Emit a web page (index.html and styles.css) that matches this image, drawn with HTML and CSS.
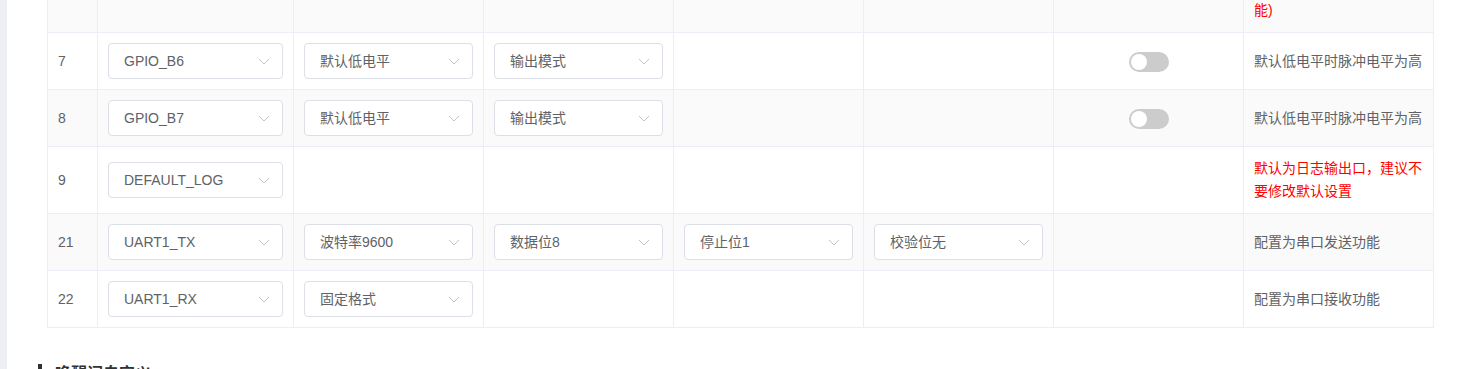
FILE: index.html
```html
<!DOCTYPE html>
<html lang="zh-CN">
<head>
  <meta charset="UTF-8">
  <meta name="viewport" content="width=device-width, initial-scale=1.0">
  <title>引脚配置</title>
  <link rel="stylesheet" href="styles.css">
</head>
<body>
  <div class="layout">
    <div class="side-strip"></div>
    <div class="page">
      <table class="pin-table">
        <colgroup>
          <col class="c-no">
          <col class="c-pin">
          <col class="c-std"><col class="c-std"><col class="c-std"><col class="c-std"><col class="c-std"><col class="c-std">
        </colgroup>
        <tbody>
          <tr>
            <td><div class="cell"></div></td>
            <td><div class="cell"></div></td>
            <td><div class="cell"></div></td>
            <td><div class="cell"></div></td>
            <td><div class="cell"></div></td>
            <td><div class="cell"></div></td>
            <td><div class="cell"></div></td>
            <td><div class="cell warn">默认为唤醒引脚，低电平时唤醒模块（需开启低功耗功能)</div></td>
          </tr>
          <tr>
            <td><div class="cell">7</div></td>
            <td><div class="cell"><div class="select">GPIO_B6<span class="arrow"><svg width="12" height="7" viewBox="0 0 12 7"><path d="M1 1 L6 6 L11 1" fill="none" stroke="#c0c4cc" stroke-width="1"/></svg></span></div></div></td>
            <td><div class="cell"><div class="select">默认低电平<span class="arrow"><svg width="12" height="7" viewBox="0 0 12 7"><path d="M1 1 L6 6 L11 1" fill="none" stroke="#c0c4cc" stroke-width="1"/></svg></span></div></div></td>
            <td><div class="cell"><div class="select">输出模式<span class="arrow"><svg width="12" height="7" viewBox="0 0 12 7"><path d="M1 1 L6 6 L11 1" fill="none" stroke="#c0c4cc" stroke-width="1"/></svg></span></div></div></td>
            <td><div class="cell"></div></td>
            <td><div class="cell"></div></td>
            <td><div class="cell center"><span class="switch"><span class="knob"></span></span></div></td>
            <td><div class="cell">默认低电平时脉冲电平为高</div></td>
          </tr>
          <tr>
            <td><div class="cell">8</div></td>
            <td><div class="cell"><div class="select">GPIO_B7<span class="arrow"><svg width="12" height="7" viewBox="0 0 12 7"><path d="M1 1 L6 6 L11 1" fill="none" stroke="#c0c4cc" stroke-width="1"/></svg></span></div></div></td>
            <td><div class="cell"><div class="select">默认低电平<span class="arrow"><svg width="12" height="7" viewBox="0 0 12 7"><path d="M1 1 L6 6 L11 1" fill="none" stroke="#c0c4cc" stroke-width="1"/></svg></span></div></div></td>
            <td><div class="cell"><div class="select">输出模式<span class="arrow"><svg width="12" height="7" viewBox="0 0 12 7"><path d="M1 1 L6 6 L11 1" fill="none" stroke="#c0c4cc" stroke-width="1"/></svg></span></div></div></td>
            <td><div class="cell"></div></td>
            <td><div class="cell"></div></td>
            <td><div class="cell center"><span class="switch"><span class="knob"></span></span></div></td>
            <td><div class="cell">默认低电平时脉冲电平为高</div></td>
          </tr>
          <tr>
            <td><div class="cell">9</div></td>
            <td><div class="cell"><div class="select">DEFAULT_LOG<span class="arrow"><svg width="12" height="7" viewBox="0 0 12 7"><path d="M1 1 L6 6 L11 1" fill="none" stroke="#c0c4cc" stroke-width="1"/></svg></span></div></div></td>
            <td><div class="cell"></div></td>
            <td><div class="cell"></div></td>
            <td><div class="cell"></div></td>
            <td><div class="cell"></div></td>
            <td><div class="cell"></div></td>
            <td><div class="cell warn">默认为日志输出口，建议不要修改默认设置</div></td>
          </tr>
          <tr>
            <td><div class="cell">21</div></td>
            <td><div class="cell"><div class="select">UART1_TX<span class="arrow"><svg width="12" height="7" viewBox="0 0 12 7"><path d="M1 1 L6 6 L11 1" fill="none" stroke="#c0c4cc" stroke-width="1"/></svg></span></div></div></td>
            <td><div class="cell"><div class="select">波特率9600<span class="arrow"><svg width="12" height="7" viewBox="0 0 12 7"><path d="M1 1 L6 6 L11 1" fill="none" stroke="#c0c4cc" stroke-width="1"/></svg></span></div></div></td>
            <td><div class="cell"><div class="select">数据位8<span class="arrow"><svg width="12" height="7" viewBox="0 0 12 7"><path d="M1 1 L6 6 L11 1" fill="none" stroke="#c0c4cc" stroke-width="1"/></svg></span></div></div></td>
            <td><div class="cell"><div class="select">停止位1<span class="arrow"><svg width="12" height="7" viewBox="0 0 12 7"><path d="M1 1 L6 6 L11 1" fill="none" stroke="#c0c4cc" stroke-width="1"/></svg></span></div></div></td>
            <td><div class="cell"><div class="select">校验位无<span class="arrow"><svg width="12" height="7" viewBox="0 0 12 7"><path d="M1 1 L6 6 L11 1" fill="none" stroke="#c0c4cc" stroke-width="1"/></svg></span></div></div></td>
            <td><div class="cell"></div></td>
            <td><div class="cell">配置为串口发送功能</div></td>
          </tr>
          <tr>
            <td><div class="cell">22</div></td>
            <td><div class="cell"><div class="select">UART1_RX<span class="arrow"><svg width="12" height="7" viewBox="0 0 12 7"><path d="M1 1 L6 6 L11 1" fill="none" stroke="#c0c4cc" stroke-width="1"/></svg></span></div></div></td>
            <td><div class="cell"><div class="select">固定格式<span class="arrow"><svg width="12" height="7" viewBox="0 0 12 7"><path d="M1 1 L6 6 L11 1" fill="none" stroke="#c0c4cc" stroke-width="1"/></svg></span></div></div></td>
            <td><div class="cell"></div></td>
            <td><div class="cell"></div></td>
            <td><div class="cell"></div></td>
            <td><div class="cell"></div></td>
            <td><div class="cell">配置为串口接收功能</div></td>
          </tr>
        </tbody>
      </table>

      <h3 class="section-title">唤醒词自定义</h3>
    </div>
  </div>
</body>
</html>
```

FILE: styles.css
```css
body {
  margin: 0;
  padding: 0;
  font-family: "Liberation Sans", "Noto Sans CJK SC", sans-serif;
  font-size: 14px;
  color: #606266;
  background-color: #fff;
}
.layout {
  display: flex;
  min-height: 100vh;
}
.side-strip {
  width: 7px;
  flex-shrink: 0;
  background-color: #eeeff4;
}
.page {
  flex: 1;
  padding-left: 40px;
}
.pin-table {
  width: 1387px;
  margin-top: -58px;
  table-layout: fixed;
  border-collapse: separate;
  border-spacing: 0;
  border-top: 1px solid #ebeef5;
  border-left: 1px solid #ebeef5;
}
.c-no { width: 50px; }
.c-pin { width: 196px; }
.c-std { width: 190px; }
.pin-table td {
  padding: 10px 0;
  border-right: 1px solid #ebeef5;
  border-bottom: 1px solid #ebeef5;
  vertical-align: middle;
}
.pin-table tr:nth-child(odd) td {
  background-color: #fafafa;
}
.cell {
  padding: 0 10px;
  line-height: 23px;
  word-break: break-all;
}
.cell.center {
  text-align: center;
}
.warn {
  color: #ff0000;
}
.select {
  position: relative;
  height: 36px;
  line-height: 34px;
  padding-left: 15px;
  border: 1px solid #dcdfe6;
  border-radius: 4px;
  background-color: #fff;
  box-sizing: border-box;
  color: #606266;
}
.select .arrow {
  position: absolute;
  right: 12px;
  top: 0;
  height: 34px;
  display: flex;
  align-items: center;
}
.switch {
  display: inline-block;
  position: relative;
  width: 40px;
  height: 20px;
  border-radius: 10px;
  background-color: #cccccc;
  vertical-align: middle;
}
.switch .knob {
  position: absolute;
  top: 2px;
  left: 2px;
  width: 16px;
  height: 16px;
  border-radius: 50%;
  background-color: #fff;
}
.section-title {
  margin: 32px 0 0 -9px;
  font-size: 16px;
  font-weight: bold;
  color: #303133;
  display: flex;
  align-items: center;
  gap: 13px;
}
.section-title::before {
  content: "";
  width: 4px;
  height: 16px;
  background-color: #303133;
}
```
